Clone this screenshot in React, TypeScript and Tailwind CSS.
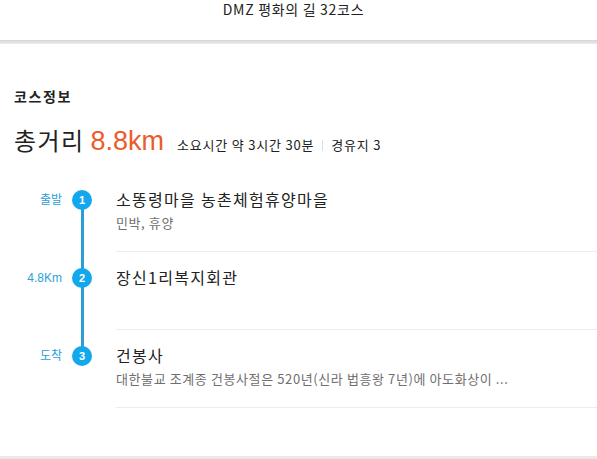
const stops = [
  { label: "출발", no: 1, title: "소똥령마을 농촌체험휴양마을", desc: "민박, 휴양" },
  { label: "4.8Km", no: 2, title: "장신1리복지회관", desc: "" },
  { label: "도착", no: 3, title: "건봉사", desc: "대한불교 조계종 건봉사절은 520년(신라 법흥왕 7년)에 아도화상이 ..." },
];

export default function App() {
  return (
    <div className="w-[597px] h-[459px] overflow-hidden bg-white text-[#222] font-['Noto_Sans_CJK_KR','Liberation_Sans',sans-serif]">
      <header className="h-10 flex justify-center pr-[10px]">
        <h1 className="text-[14px] leading-5 font-normal tracking-[0.7px] -mt-[1px]">DMZ 평화의 길 32코스</h1>
      </header>
      <div className="h-1 bg-gradient-to-b from-[#d6d6d6] to-[#ececec]" />

      <section className="h-[412px] pt-[42px]">
        <h2 className="px-[14px] text-[14px] leading-5 font-bold tracking-[1.6px]">코스정보</h2>
        <div className="mt-[18px] px-[14px] flex items-baseline">
          <span className="text-[24px] leading-8 tracking-[1.4px]">총거리</span>
          <span className="ml-[6px] text-[27px] leading-8 text-[#eb5b2b] font-['Liberation_Sans','Noto_Sans_CJK_KR',sans-serif]">8.8km</span>
          <span className="ml-[13px] text-[13px] leading-5 tracking-[0.8px]">소요시간 약 3시간 30분</span>
          <span className="mx-[8px] w-px h-[11px] bg-[#ddd] self-center translate-y-[5px]" />
          <span className="text-[13px] leading-5 tracking-[0.8px]">경유지 3</span>
        </div>

        <ol className="mt-[17px]">
          {stops.map((s, i) => (
            <li key={s.no} className="relative flex h-[78px]">
              {i > 0 && <span className="absolute left-[81px] top-0 h-[27px] w-[3px] bg-[#2b9fd4]" />}
              {i < stops.length - 1 && <span className="absolute left-[81px] top-[27px] bottom-0 w-[3px] bg-[#2b9fd4]" />}
              <div className="w-[116px] shrink-0 flex items-start pt-[16px]">
                <span className="w-[62px] text-right text-[12px] leading-5 text-[#2a9fd8] font-['Liberation_Sans','Noto_Sans_CJK_KR',sans-serif]">{s.label}</span>
                <span className="relative ml-[10px] w-5 h-5 rounded-full bg-[#13a8ec] text-white text-[11px] font-bold leading-5 text-center font-['Liberation_Sans',sans-serif]">{s.no}</span>
              </div>
              <div className="flex-1 border-b border-[#ececec] pt-[15px]">
                <p className="text-[16px] leading-5 tracking-[1.3px]">{s.title}</p>
                {s.desc && <p className="mt-[5px] text-[13px] leading-[18px] text-[#6f6f6f] tracking-[0.6px]">{s.desc}</p>}
              </div>
            </li>
          ))}
        </ol>
      </section>
      <div className="h-[3px] bg-[#e8e8e8]" />
    </div>
  );
}
